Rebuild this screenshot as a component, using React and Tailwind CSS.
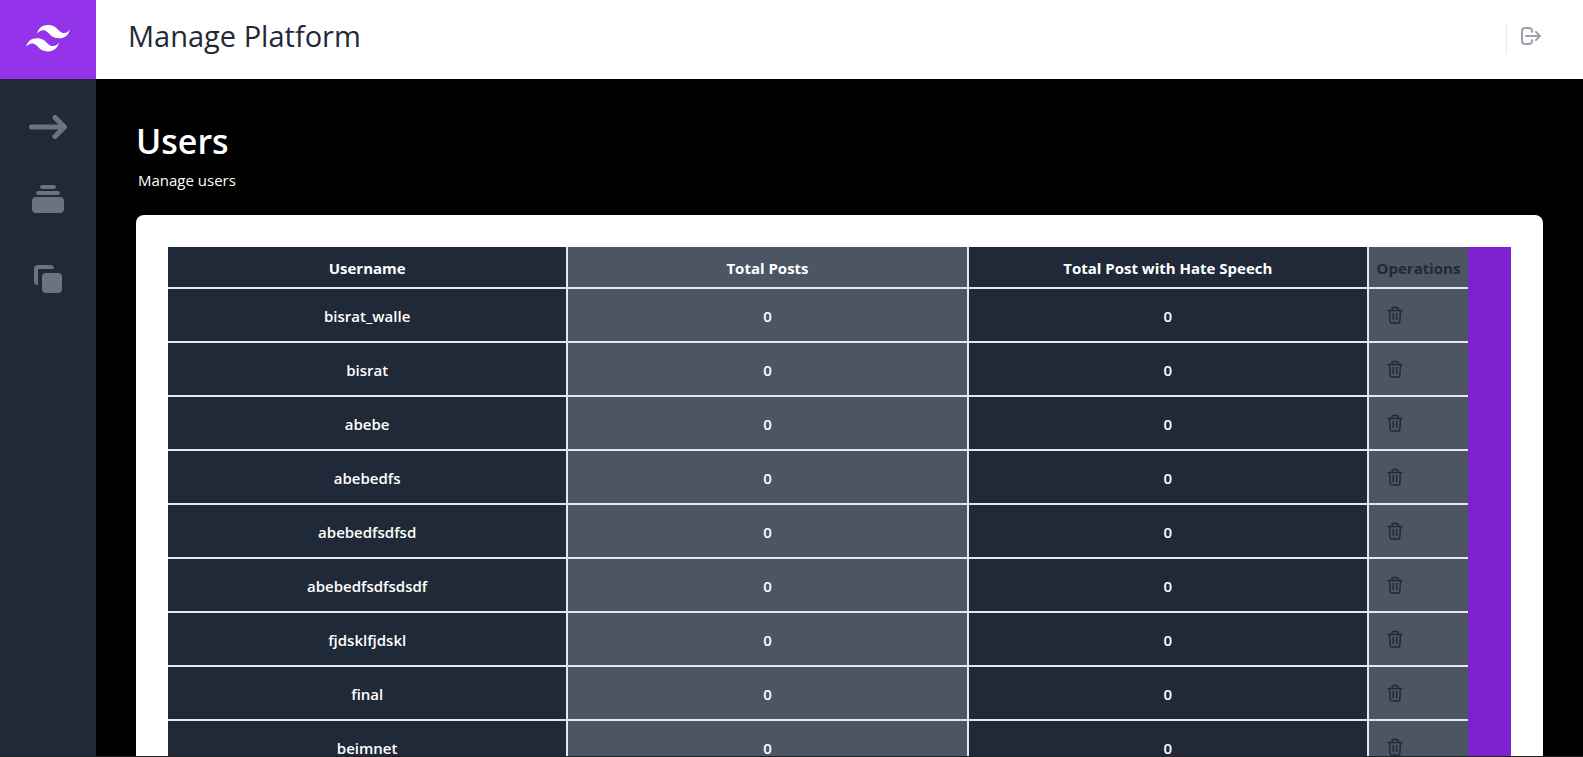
const users = [
  "bisrat_walle",
  "bisrat",
  "abebe",
  "abebedfs",
  "abebedfsdfsd",
  "abebedfsdfsdsdf",
  "fjdsklfjdskl",
  "final",
  "beimnet",
];

function Logo() {
  return (
    <svg viewBox="0 0 54 33" className="w-11" fill="#fff" aria-hidden="true">
      <path d="M27 0c-7.2 0-11.7 3.6-13.5 10.8 2.7-3.6 5.85-4.95 9.45-4.05 2.054.513 3.522 2.004 5.147 3.653C30.744 13.09 33.808 16.2 40.5 16.2c7.2 0 11.7-3.6 13.5-10.8-2.7 3.6-5.85 4.95-9.45 4.05-2.054-.513-3.522-2.004-5.147-3.653C36.756 3.11 33.692 0 27 0zM13.5 16.2C6.3 16.2 1.8 19.8 0 27c2.7-3.6 5.85-4.95 9.45-4.05 2.054.514 3.522 2.004 5.147 3.653C17.244 29.29 20.308 32.4 27 32.4c7.2 0 11.7-3.6 13.5-10.8-2.7 3.6-5.85 4.95-9.45 4.05-2.054-.513-3.522-2.004-5.147-3.653C23.256 19.31 20.192 16.2 13.5 16.2z" />
    </svg>
  );
}

function ArrowIcon() {
  return (
    <svg viewBox="0 0 40 24" className="w-10 h-6" fill="none" stroke="currentColor" strokeWidth="5" strokeLinecap="round" strokeLinejoin="round" aria-hidden="true">
      <path d="M3.5 12H36M27 2.5L36.500 12 27 21.500" />
    </svg>
  );
}

function CollectionIcon() {
  return (
    <svg viewBox="0 0 20 20" className="size-10" fill="currentColor" aria-hidden="true">
      <path d="M7 3a1 1 0 000 2h6a1 1 0 100-2H7zM4 7a1 1 0 011-1h10a1 1 0 110 2H5a1 1 0 01-1-1zM2 11a2 2 0 012-2h12a2 2 0 012 2v4a2 2 0 01-2 2H4a2 2 0 01-2-2v-4z" />
    </svg>
  );
}

function DuplicateIcon() {
  return (
    <svg viewBox="0 0 20 20" className="size-10" fill="currentColor" aria-hidden="true">
      <path d="M7 9a2 2 0 012-2h6a2 2 0 012 2v6a2 2 0 01-2 2H9a2 2 0 01-2-2V9z" />
      <path d="M5 3a2 2 0 00-2 2v6a2 2 0 002 2V5h8a2 2 0 00-2-2H5z" />
    </svg>
  );
}

function LogoutIcon() {
  return (
    <svg viewBox="0 0 24 24" className="size-6" fill="none" stroke="currentColor" strokeWidth="2" strokeLinecap="round" strokeLinejoin="round" aria-hidden="true">
      <path d="M17 16l4-4m0 0l-4-4m4 4H7m6 4v1a3 3 0 01-3 3H6a3 3 0 01-3-3V7a3 3 0 013-3h4a3 3 0 013 3v1" />
    </svg>
  );
}

function TrashIcon() {
  return (
    <svg viewBox="0 0 16 18" className="w-4 h-[18px]" fill="none" stroke="currentColor" strokeWidth="1.500" strokeLinecap="round" strokeLinejoin="round" aria-hidden="true">
      <path d="M1 4.500h14M5 4.500V2.500a1 1 0 011-1h4a1 1 0 011 1v2M2.500 4.500l.7 11a1.500 1.500 0 001.500 1.500h6.600a1.500 1.500 0 001.500-1.500l.7-11M6.300 7.500v6M9.700 7.500v6" />
    </svg>
  );
}

const dark = "bg-[#1f2937] text-white pt-[2px]";
const light = "bg-[#4b5563]";
const line = "border-[#e5e7eb]";

export default function App() {
  return (
    <div className="flex h-screen overflow-hidden border-b border-[#222222] bg-black font-['Open_Sans','Noto_Sans',sans-serif]">
      <aside className="flex w-24 shrink-0 flex-col bg-[#1f2937] text-[#6b7280]">
        <a href="#home" aria-label="Home" className="flex h-[79px] items-center justify-center bg-[#9333ea] pb-[2px]">
          <Logo />
        </a>
        <nav className="flex flex-col items-center pt-9">
          <a href="#open" aria-label="Open menu"><ArrowIcon /></a>
          <a href="#collections" aria-label="Collections" className="mt-10"><CollectionIcon /></a>
          <a href="#copies" aria-label="Copies" className="mt-10"><DuplicateIcon /></a>
        </nav>
      </aside>
      <div className="flex min-w-0 flex-1 flex-col">
        <header className="flex h-[79px] shrink-0 items-start justify-between bg-white pl-8 pr-10">
          <h1 className="pt-4 text-[29px] leading-10 text-[#1f2937]">Manage Platform</h1>
          <div className="mt-6 flex h-[30px] border-l border-[#e5e7eb] pl-3">
            <button type="button" aria-label="Log out" className="flex h-6 text-[#9ca3af]"><LogoutIcon /></button>
          </div>
        </header>
        <main className="flex-1 px-10 pt-10 text-white">
          <h2 className="text-[34px] font-semibold leading-[44px]">Users</h2>
          <p className="pl-[2px] pt-[5px] text-[15px] leading-6">Manage users</p>
          <div className="mt-[23px] rounded-lg bg-white p-8">
            <div className="bg-[#7e22ce] pr-[43px]">
              <table className="w-full table-fixed border-separate border-spacing-0 text-center text-[15px]">
                <colgroup>
                  <col />
                  <col />
                  <col />
                  <col className="w-[99px]" />
                </colgroup>
                <thead>
                  <tr className="h-[42px] font-bold">
                    <th className={`border-b-2 border-r-2 ${line} ${dark}`}>Username</th>
                    <th className={`border-b-2 border-r-2 pt-[2px] ${line} ${light}`}>Total Posts</th>
                    <th className={`border-b-2 border-r-2 ${line} ${dark}`}>Total Post with Hate Speech</th>
                    <th className={`border-b-2 pt-[2px] ${line} ${light} text-[#1f2937]`}>Operations</th>
                  </tr>
                </thead>
                <tbody>
                  {users.map((name) => (
                    <tr key={name} className="h-[54px] font-semibold">
                      <td className={`border-b-2 border-r-2 ${line} ${dark}`}>{name}</td>
                      <td className={`border-b-2 border-r-2 pt-[2px] ${line} ${light}`}>0</td>
                      <td className={`border-b-2 border-r-2 ${line} ${dark}`}>0</td>
                      <td className={`border-b-2 pl-[18px] ${line} ${light} text-[#1f2937]`}>
                        <button type="button" aria-label={`Delete ${name}`} className="flex"><TrashIcon /></button>
                      </td>
                    </tr>
                  ))}
                </tbody>
              </table>
            </div>
          </div>
        </main>
      </div>
    </div>
  );
}
